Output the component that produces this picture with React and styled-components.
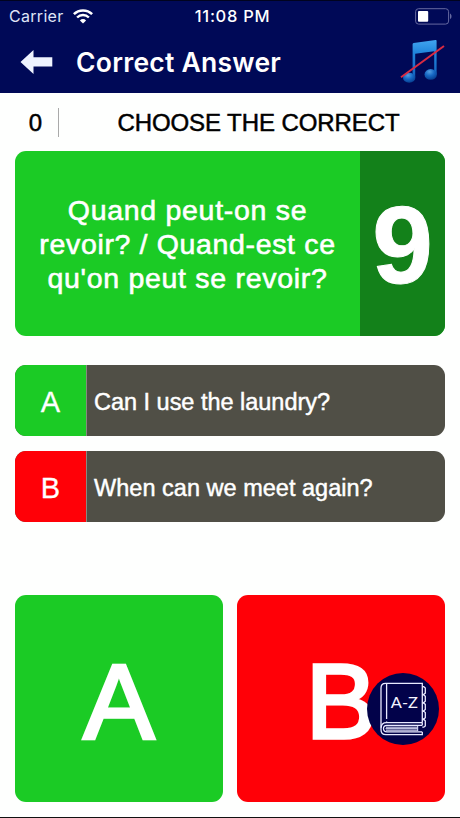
import React from 'react';
import styled, { createGlobalStyle } from 'styled-components';

const GlobalStyle = createGlobalStyle`
  * {
    box-sizing: border-box;
  }

  body {
    margin: 0;
    background: #fff;
    font-family: 'Liberation Sans', Arial, sans-serif;
  }
`;

const Screen = styled.main`
  display: flex;
  flex-direction: column;
  width: 460px;
  height: 818px;
  overflow: hidden;
  background: #fefffe;
  border-bottom: 1px solid #111;
`;

const Header = styled.header`
  height: 93px;
  background: #000957;
  border-top: 1px solid #00031f;
  color: #fff;
  font-family: Inter, sans-serif;
`;

const StatusBar = styled.div`
  display: grid;
  grid-template-columns: 1fr auto 1fr;
  align-items: center;
  height: 30px;
  padding: 0 8px 0 9px;
  font-size: 16px;
`;

const Carrier = styled.div`
  display: flex;
  align-items: center;
  gap: 9px;
  color: #dfe3f6;
  letter-spacing: 0.3px;
`;

const Clock = styled.div`
  padding-left: 4px;
  font-size: 16.5px;
  font-weight: 500;
  letter-spacing: 0.7px;
`;

const BatterySlot = styled.div`
  display: flex;
  justify-content: flex-end;
`;

const NavBar = styled.div`
  display: flex;
  align-items: center;
  height: 62px;
  padding: 0 14px 0 20px;
`;

const Title = styled.h1`
  flex: 1;
  margin: -1px 0 0 23px;
  font-size: 26.5px;
  font-weight: 600;
  letter-spacing: 0.25px;
`;

const Prompt = styled.div`
  display: flex;
  align-items: center;
  height: 58px;
  color: #000;
  font-size: 24px;
  -webkit-text-stroke: 0.5px currentColor;
`;

const Score = styled.div`
  width: 59px;
  height: 29px;
  padding-left: 13px;
  border-right: 1px solid #aaa;
  line-height: 30px;
  text-align: center;
`;

const PromptText = styled.div`
  flex: 1;
  padding-right: 2px;
  line-height: 31px;
  text-align: center;
  letter-spacing: ${props => props.$spacing};
  white-space: nowrap;
`;

const Question = styled.section`
  display: flex;
  height: 184.5px;
  margin: 0 15px;
  border-radius: 11px;
  background: #1bcb25;
  color: #fff;
  overflow: hidden;
`;

const QuestionText = styled.div`
  flex: 1;
  padding-top: 41.5px;
  font-size: 28.5px;
  line-height: 34.3px;
  text-align: center;
  -webkit-text-stroke: 0.6px currentColor;
`;

const Line = styled.div`
  letter-spacing: ${props => props.$spacing};
  white-space: nowrap;
`;

const Countdown = styled.div`
  width: 85px;
  background: #13811a;
  font-size: 109px;
  font-weight: bold;
  line-height: 189px;
  text-align: center;
  -webkit-text-stroke: 1px currentColor;
`;

const Answers = styled.section`
  display: flex;
  flex-direction: column;
  gap: 14.5px;
  margin: 29px 15px 0;
`;

const Answer = styled.div`
  display: flex;
  height: 71.5px;
  border-radius: 11px;
  background: #504f46;
  color: #fff;
  font-size: 23.5px;
  line-height: 74px;
  overflow: hidden;
`;

const AnswerKey = styled.div`
  width: 72px;
  border-right: 1px solid #88897f;
  background: ${props => props.$color};
  font-size: 29px;
  line-height: 74px;
  text-align: center;
  -webkit-text-stroke: 0.3px currentColor;
`;

const AnswerText = styled.div`
  padding-left: 7px;
  letter-spacing: ${props => props.$spacing};
  white-space: nowrap;
  -webkit-text-stroke: 0.45px currentColor;
`;

const Choices = styled.section`
  display: grid;
  grid-template-columns: 1fr 1fr;
  gap: 14.5px;
  margin: 72.5px 15px 0;
`;

const Choice = styled.button`
  position: relative;
  height: 207.5px;
  padding: 6px 0 0;
  border: 0;
  border-radius: 11px;
  background: ${props => props.$color};
  color: #fff;
  font-family: inherit;
  font-size: 106px;
  line-height: 1;
  -webkit-text-stroke: 3.5px currentColor;
`;

// Floats over the corner of the B tile
const DictionaryBadge = styled.span`
  position: absolute;
  top: 78.5px;
  right: 6.5px;
  display: flex;
  width: 72px;
  height: 72px;
  border-radius: 50%;
  background: #02024a;
  -webkit-text-stroke: 0;
`;

const GREEN = '#1bcb25';
const RED = '#ff0007';

const WifiIcon = () => (
  <svg width="20" height="15" viewBox="0 0 20 15" fill="none" stroke="#fff">
    <path d="M.9 5.2a12.8 12.8 0 0 1 18.2 0" strokeWidth="2.5" />
    <path d="M4.1 8.5a8.3 8.3 0 0 1 11.8 0" strokeWidth="2.4" />
    <path d="M10 14.5 6.9 11.4a4.4 4.4 0 0 1 6.2 0z" fill="#fff" stroke="none" />
  </svg>
);

const BatteryIcon = () => (
  <svg width="37" height="17" viewBox="0 0 37 17">
    <rect x=".6" y=".7" width="33" height="15.4" rx="3" fill="none" stroke="#6569a0" />
    <rect x="3" y="3" width="10.2" height="10.8" rx="1" fill="#fff" />
    <path d="M35 5.6c2 1 2 4.6 0 5.6z" fill="#6569a0" />
  </svg>
);

const BackIcon = () => (
  <svg width="33" height="26" viewBox="0 0 33 26">
    <path d="M.5 13 13.5 1v7.2h18.8v9.3H13.5V25z" fill="#eef3ff" />
  </svg>
);

const MusicOffIcon = () => (
  <svg width="46" height="46" viewBox="0 0 46 46">
    <defs>
      <linearGradient id="note" x1="0" y1="0" x2="0" y2="1">
        <stop offset="0" stopColor="#41a4ef" />
        <stop offset=".35" stopColor="#2085dc" />
        <stop offset="1" stopColor="#1263c0" />
      </linearGradient>
      <radialGradient id="head" cx=".4" cy=".25" r=".75">
        <stop offset="0" stopColor="#549fe2" />
        <stop offset=".5" stopColor="#1668c4" />
        <stop offset="1" stopColor="#073f92" />
      </radialGradient>
    </defs>
    <path
      d="M12.6 5.2Q12.6 4.3 13.6 4.1L35.6.9Q36.6.8 36.6 1.800V35h-2.400V12.300L15.200 14.700V38h-2.600z"
      fill="url(#note)"
    />
    <ellipse cx="9.2" cy="38.8" rx="6.2" ry="5" fill="url(#head)" />
    <ellipse cx="30.7" cy="35.4" rx="6.2" ry="5.3" fill="url(#head)" />
    <path d="M1 38.3 44 7" stroke="#d92b42" strokeWidth="2" />
  </svg>
);

const DictionaryIcon = () => (
  <svg width="72" height="72" viewBox="0 0 72 72" fill="none" stroke="#e8e9ff" strokeWidth="1.3">
    <path d="M55.3 49.7V10.4H18.6q-4.6 0-4.6 4.6v41.8q0 4.900 4.900 4.900h36.400v-2.800" />
    <path d="M19.6 11v35M19.6 48.5v1.2" />
    <path d="M55.3 49.7H19.5q-5.3 0-5.3 5" />
    <path d="M55.3 52.3H20q-3.5 0-3.5 3.200t3.500 3.300h35.300M55.300 52.300v-2.600" />
    <path d="M19 54.2h31.5M18.5 55.7h32M19 57.2h31.5M50.7 53v5" strokeWidth="1" />
    {[0, 1, 2, 3, 4].map(i => (
      <path key={i} d={`M55.3 ${13.7 + i * 8.2}h1.5l1.5 1.3v5.100l-1.500 1.300h-1.500`} />
    ))}
    <text
      x="23.8"
      y="35"
      fill="#f4f4ff"
      stroke="none"
      fontFamily="Lato, sans-serif"
      fontSize="15"
      textLength="27"
      lengthAdjust="spacingAndGlyphs"
    >
      A-Z
    </text>
  </svg>
);

const App = () => (
  <>
    <GlobalStyle />
    <Screen>
      <Header>
        <StatusBar>
          <Carrier>
            Carrier
            <WifiIcon />
          </Carrier>
          <Clock>11:08 PM</Clock>
          <BatterySlot>
            <BatteryIcon />
          </BatterySlot>
        </StatusBar>
        <NavBar>
          <BackIcon />
          <Title>Correct Answer</Title>
          <MusicOffIcon />
        </NavBar>
      </Header>
      <Prompt>
        <Score>0</Score>
        <PromptText $spacing="-0.08px">CHOOSE THE CORRECT</PromptText>
      </Prompt>
      <Question>
        <QuestionText>
          <Line $spacing="0.7px">Quand peut-on se</Line>
          <Line $spacing="0.65px">revoir? / Quand-est ce</Line>
          <Line $spacing="0.7px">qu'on peut se revoir?</Line>
        </QuestionText>
        <Countdown>9</Countdown>
      </Question>
      <Answers>
        <Answer>
          <AnswerKey $color={GREEN}>A</AnswerKey>
          <AnswerText $spacing="-0.02px">Can I use the laundry?</AnswerText>
        </Answer>
        <Answer>
          <AnswerKey $color={RED}>B</AnswerKey>
          <AnswerText $spacing="0.02px">When can we meet again?</AnswerText>
        </Answer>
      </Answers>
      <Choices>
        <Choice $color={GREEN}>A</Choice>
        <Choice $color={RED}>
          B
          <DictionaryBadge>
            <DictionaryIcon />
          </DictionaryBadge>
        </Choice>
      </Choices>
    </Screen>
  </>
);

export default App;
